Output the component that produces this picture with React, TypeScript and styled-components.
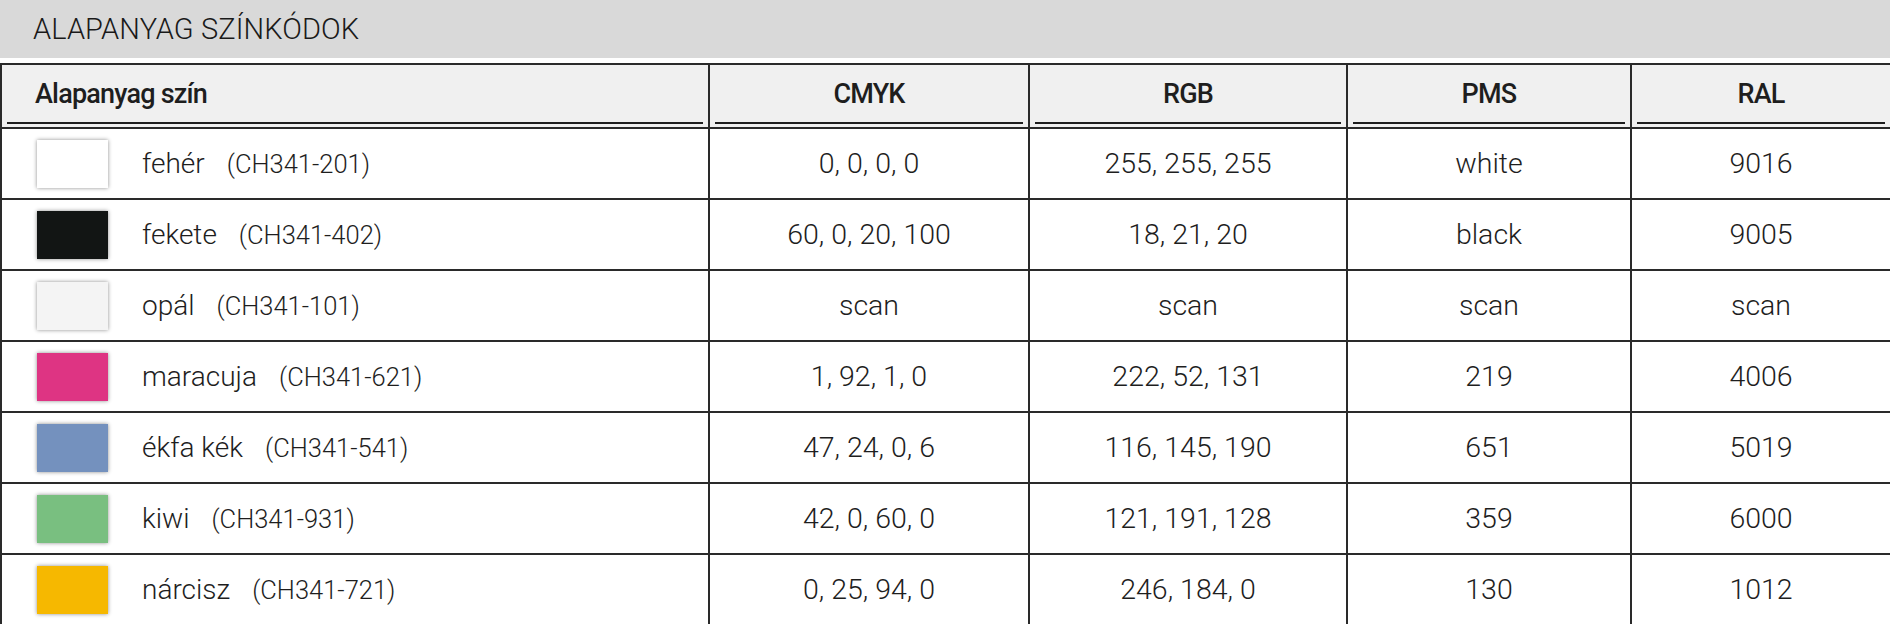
import React from 'react';
import styled, { createGlobalStyle } from 'styled-components';

const GlobalStyle = createGlobalStyle`
  html, body {
    margin: 0;
    padding: 0;
    background: #ffffff;
    font-family: Roboto, "Liberation Sans", sans-serif;
    color: #1e1e1e;
  }
`;

const Page = styled.div`
  width: 1890px;
  display: flex;
  flex-direction: column;
  gap: 5px;
`;

const TitleBar = styled.div`
  height: 58px;
  background: #d9d9d9;
  display: flex;
  align-items: center;
  padding-left: 33px;
  font-size: 29px;
  font-weight: 300;
  color: #1a1a1a;
  letter-spacing: 0.1px;
`;

const Table = styled.table`
  width: 1890px;
  border-collapse: collapse;
  table-layout: fixed;
`;

const HeadCell = styled.th<{ $align?: 'left' | 'center' }>`
  background: #f0f0f0;
  padding: 0 5px 3px;
  border: 2px solid #2a2a2a;
  border-bottom-width: 1px;
  font-weight: 500;
  font-size: 27px;
  letter-spacing: -0.8px;
  text-align: ${({ $align }) => $align || 'center'};
`;

const HeadInner = styled.div<{ $align?: 'left' | 'center' }>`
  height: 57px;
  border-bottom: 2px solid #1e1e1e;
  display: flex;
  align-items: center;
  justify-content: ${({ $align }) => ($align === 'left' ? 'flex-start' : 'center')};
  padding-left: ${({ $align }) => ($align === 'left' ? '28px' : '0')};
`;

const Row = styled.tr`
  height: 71px;
`;

const Cell = styled.td`
  border: 2px solid #2a2a2a;
  text-align: center;
  font-size: 28.5px;
  font-weight: 300;
  padding: 0;
`;

const NameCell = styled.td`
  border: 2px solid #2a2a2a;
  padding: 0 0 0 35px;
`;

const NameWrap = styled.div`
  display: flex;
  align-items: center;
`;

const Swatch = styled.div<{ $color: string }>`
  width: 71px;
  height: 48px;
  background: ${({ $color }) => $color};
  box-shadow: 0 0 4px rgba(0, 0, 0, 0.45);
  margin-right: 34px;
  flex-shrink: 0;
`;

const ColorName = styled.span`
  font-size: 28px;
  font-weight: 300;
  margin-right: 22px;
`;

const Code = styled.span`
  font-size: 25.5px;
  font-weight: 300;
`;

const rows = [
  { color: '#ffffff', name: 'fehér', code: 'CH341-201', cmyk: '0, 0, 0, 0', rgb: '255, 255, 255', pms: 'white', ral: '9016' },
  { color: '#121514', name: 'fekete', code: 'CH341-402', cmyk: '60, 0, 20, 100', rgb: '18, 21, 20', pms: 'black', ral: '9005' },
  { color: '#f4f4f4', name: 'opál', code: 'CH341-101', cmyk: 'scan', rgb: 'scan', pms: 'scan', ral: 'scan' },
  { color: '#de3483', name: 'maracuja', code: 'CH341-621', cmyk: '1, 92, 1, 0', rgb: '222, 52, 131', pms: '219', ral: '4006' },
  { color: '#7491be', name: 'ékfa kék', code: 'CH341-541', cmyk: '47, 24, 0, 6', rgb: '116, 145, 190', pms: '651', ral: '5019' },
  { color: '#79bf80', name: 'kiwi', code: 'CH341-931', cmyk: '42, 0, 60, 0', rgb: '121, 191, 128', pms: '359', ral: '6000' },
  { color: '#f6b800', name: 'nárcisz', code: 'CH341-721', cmyk: '0, 25, 94, 0', rgb: '246, 184, 0', pms: '130', ral: '1012' },
];

const App: React.FC = () => {
  return (
    <>
      <GlobalStyle />
      <Page>
        <TitleBar>ALAPANYAG SZÍNKÓDOK</TitleBar>
        <Table>
          <colgroup>
            <col style={{ width: 708 }} />
            <col style={{ width: 320 }} />
            <col style={{ width: 318 }} />
            <col style={{ width: 284 }} />
            <col style={{ width: 260 }} />
          </colgroup>
          <thead>
            <tr>
              <HeadCell $align="left">
                <HeadInner $align="left">Alapanyag szín</HeadInner>
              </HeadCell>
              <HeadCell>
                <HeadInner>CMYK</HeadInner>
              </HeadCell>
              <HeadCell>
                <HeadInner>RGB</HeadInner>
              </HeadCell>
              <HeadCell>
                <HeadInner>PMS</HeadInner>
              </HeadCell>
              <HeadCell>
                <HeadInner>RAL</HeadInner>
              </HeadCell>
            </tr>
          </thead>
          <tbody>
            {rows.map((r) => (
              <Row key={r.code}>
                <NameCell>
                  <NameWrap>
                    <Swatch $color={r.color} />
                    <ColorName>{r.name}</ColorName>
                    <Code>({r.code})</Code>
                  </NameWrap>
                </NameCell>
                <Cell>{r.cmyk}</Cell>
                <Cell>{r.rgb}</Cell>
                <Cell>{r.pms}</Cell>
                <Cell>{r.ral}</Cell>
              </Row>
            ))}
          </tbody>
        </Table>
      </Page>
    </>
  );
};

export default App;
